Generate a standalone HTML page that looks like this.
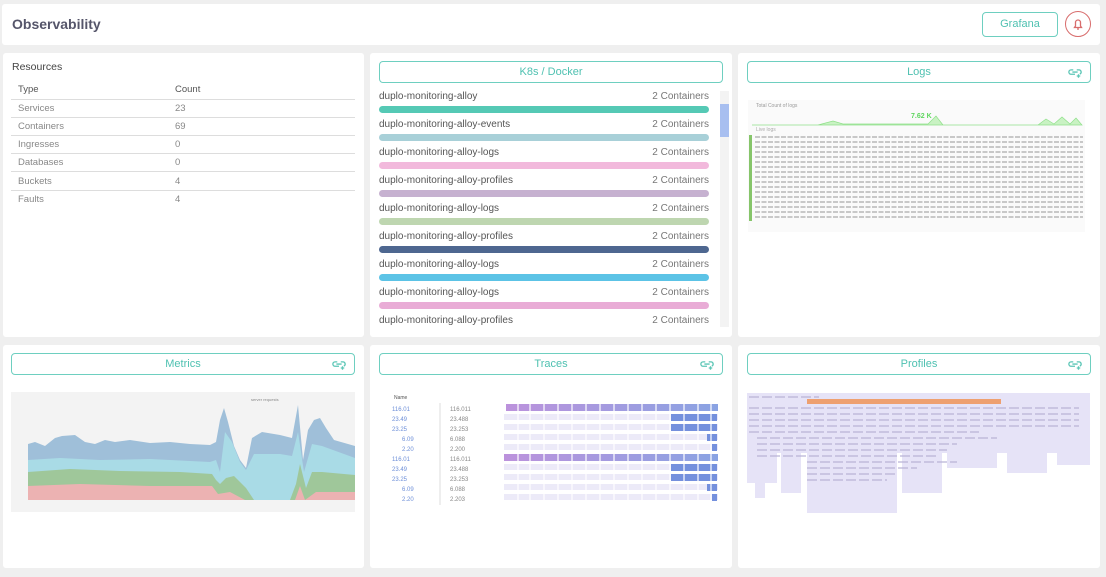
<!DOCTYPE html>
<html><head><meta charset="utf-8"><style>
*{margin:0;padding:0;box-sizing:border-box}
body{width:1106px;height:577px;background:#efefef;font-family:"Liberation Sans",sans-serif;position:relative;overflow:hidden;color:#555}
.card{position:absolute;background:#fff;border-radius:3px}
.btn{position:absolute;border:1.5px solid #6ecfc0;border-radius:4px;color:#4fc1b1;font-size:11px;text-align:center;line-height:21px;height:22px}
.lk{position:absolute;right:8px;top:5px}
.row{position:absolute;left:379px;width:330px;font-size:10px;color:#555}
.row span{float:right;color:#777}
.bar{position:absolute;left:379px;width:330px;height:7px;border-radius:4px}
table{border-collapse:collapse;position:absolute;left:11px;top:81px;width:344px;font-size:9.5px}
td,th{text-align:left;height:18.2px;padding-left:7px;border-bottom:1px solid #ddd;font-weight:normal;color:#888}
th{color:#555}
</style></head><body>
<div class="card" style="left:2px;top:4px;width:1098px;height:41px"></div>
<div style="position:absolute;left:12px;top:16px;font-size:14px;font-weight:bold;color:#55556a">Observability</div>
<div class="btn" style="left:982px;top:12px;width:76px;height:25px;line-height:23px">Grafana</div>
<div style="position:absolute;left:1065px;top:11px;width:26px;height:26px;border:1.3px solid #d86c6c;border-radius:50%"><svg width="24" height="24" viewBox="0 0 24 24"><path d="M8.5 15.5h7l-1-1.5v-3.5a2.5 2.5 0 0 0-5 0V14z" fill="none" stroke="#d86c6c" stroke-width="1.3"/><path d="M11 17h2" stroke="#d86c6c" stroke-width="1.3"/></svg></div>

<div class="card" style="left:3px;top:53px;width:361px;height:284px"></div>
<div class="card" style="left:370px;top:53px;width:362px;height:284px"></div>
<div class="card" style="left:738px;top:53px;width:362px;height:284px"></div>
<div class="card" style="left:3px;top:345px;width:361px;height:223px"></div>
<div class="card" style="left:370px;top:345px;width:362px;height:223px"></div>
<div class="card" style="left:738px;top:345px;width:362px;height:223px"></div>

<div style="position:absolute;left:12px;top:61px;font-size:10.5px;color:#444">Resources</div>
<table><tr><th>Type</th><th style="padding-left:0">Count</th></tr>
<tr><td style="width:164px">Services</td><td style="padding-left:0">23</td></tr>
<tr><td>Containers</td><td style="padding-left:0">69</td></tr>
<tr><td>Ingresses</td><td style="padding-left:0">0</td></tr>
<tr><td>Databases</td><td style="padding-left:0">0</td></tr>
<tr><td>Buckets</td><td style="padding-left:0">4</td></tr>
<tr><td style="border:none">Faults</td><td style="padding-left:0;border:none">4</td></tr></table>

<div class="btn" style="left:379px;top:61px;width:344px">K8s / Docker</div>
<div class="row" style="top:91px">duplo-monitoring-alloy<span>2 Containers</span></div>
<div class="bar" style="top:106px;background:#55c9b5"></div>
<div class="row" style="top:119px">duplo-monitoring-alloy-events<span>2 Containers</span></div>
<div class="bar" style="top:134px;background:#a8d0d8"></div>
<div class="row" style="top:147px">duplo-monitoring-alloy-logs<span>2 Containers</span></div>
<div class="bar" style="top:162px;background:#f2b9dc"></div>
<div class="row" style="top:175px">duplo-monitoring-alloy-profiles<span>2 Containers</span></div>
<div class="bar" style="top:190px;background:#c6b1d0"></div>
<div class="row" style="top:203px">duplo-monitoring-alloy-logs<span>2 Containers</span></div>
<div class="bar" style="top:218px;background:#bed6b0"></div>
<div class="row" style="top:231px">duplo-monitoring-alloy-profiles<span>2 Containers</span></div>
<div class="bar" style="top:246px;background:#4e6790"></div>
<div class="row" style="top:259px">duplo-monitoring-alloy-logs<span>2 Containers</span></div>
<div class="bar" style="top:274px;background:#5cc3e6"></div>
<div class="row" style="top:287px">duplo-monitoring-alloy-logs<span>2 Containers</span></div>
<div class="bar" style="top:302px;background:#e9acd6"></div>
<div class="row" style="top:315px">duplo-monitoring-alloy-profiles<span>2 Containers</span></div>
<div style="position:absolute;left:720px;top:91px;width:9px;height:236px;background:#f3f3f3"></div>
<div style="position:absolute;left:720px;top:104px;width:9px;height:33px;background:#a8bff0"></div>

<svg width="0" height="0" style="position:absolute"><defs><symbol id="lnk" viewBox="0 0 16 12"><path d="M6 3H3.5a2.5 2.5 0 0 0 0 5H8M10 3h2.5a2.5 2.5 0 0 1 1 4.8M5 5.5h6M12 8v4M10 10h4" fill="none" stroke="#5cc6b6" stroke-width="1.5"/></symbol></defs></svg>

<div class="btn" style="left:747px;top:61px;width:344px">Logs<svg class="lk" width="14" height="11"><use href="#lnk"/></svg></div>
<svg style="position:absolute;left:748px;top:100px" width="337" height="132">
<rect width="337" height="132" fill="#fafafa"/>
<text x="8" y="7" font-size="5" fill="#999">Total Count of logs</text>
<text x="163" y="18" font-size="7" fill="#5fd65f" font-weight="bold">7.62 K</text>
<path d="M4 25 L70 25 L85 21 L95 24 L180 24 L188 16 L195 25 L290 25 L298 19 L306 24 L314 17 L322 24 L328 18 L334 25 Z" fill="#c9f2c3" stroke="#8fe08a" stroke-width="0.7"/>
<text x="8" y="31" font-size="5" fill="#aaa">Live logs</text>
<rect x="1" y="35" width="3" height="86" fill="#86c56a"/>
<g stroke="#b8b8b8" stroke-width="1.5" stroke-dasharray="5 1.5">
<path d="M7 37h328M7 42h328M7 47h328M7 52h328M7 57h328M7 62h328M7 67h328M7 72h328M7 77h328M7 82h328M7 87h328M7 92h328M7 97h328M7 102h328M7 107h328M7 112h328M7 117h328"/>
</g></svg>

<div class="btn" style="left:11px;top:353px;width:344px">Metrics<svg class="lk" width="14" height="11"><use href="#lnk"/></svg></div>
<svg style="position:absolute;left:11px;top:392px" width="344" height="120">
<rect width="344" height="120" fill="#f3f3f3"/>
<g transform="translate(-11,-12)">
<path d="M28 64 L35 62 L45 66 L55 58 L62 56 L75 55 L85 62 L95 64 L105 60 L115 62 L130 60 L150 63 L170 62 L190 64 L210 65 L216 62 L220 40 L224 28 L228 42 L234 66 L240 80 L246 88 L252 58 L262 52 L280 55 L292 58 L298 25 L303 80 L308 50 L314 40 L320 38 L326 48 L334 60 L355 66 L355 120 L28 120Z" fill="#9fbfd9"/>
<path d="M28 80 L60 78 L100 80 L150 79 L210 82 L216 80 L220 92 L225 52 L232 62 L240 82 L246 90 L254 74 L280 74 L292 76 L298 52 L304 92 L312 64 L322 66 L355 78 L355 120 L28 120Z" fill="#a9dbe6"/>
<path d="M28 92 L70 89 L120 91 L180 92 L212 94 L216 100 L220 104 L226 98 L234 96 L246 108 L254 120 L290 120 L296 104 L300 84 L306 108 L312 92 L322 92 L355 95 L355 120 L28 120Z" fill="#9fc79a"/>
<path d="M28 106 L80 104 L150 106 L212 106 L218 114 L230 112 L245 120 L295 120 L300 106 L305 120 L316 112 L355 112 L355 120 L28 120Z" fill="#ecb2b2"/>
</g>
<rect x="0" y="108" width="344" height="12" fill="#f3f3f3"/>
<text x="240" y="9" font-size="4" fill="#888">server requests</text>
</svg>

<div class="btn" style="left:379px;top:353px;width:344px">Traces<svg class="lk" width="14" height="11"><use href="#lnk"/></svg></div>
<svg style="position:absolute;left:378px;top:393px" width="345" height="115">
<text x="16" y="6" font-size="5" fill="#555">Name</text>
<g font-size="6" fill="#6d8fd8">
<text x="14" y="18">116.01</text><text x="14" y="28">23.49</text><text x="14" y="38">23.25</text><text x="24" y="48">6.09</text><text x="24" y="58">2.20</text><text x="14" y="68">116.01</text><text x="14" y="78">23.49</text><text x="14" y="88">23.25</text><text x="24" y="98">6.09</text><text x="24" y="108">2.20</text></g>
<g font-size="6" fill="#888">
<text x="72" y="18">116.011</text><text x="72" y="28">23.488</text><text x="72" y="38">23.253</text><text x="72" y="48">6.088</text><text x="72" y="58">2.200</text><text x="72" y="68">116.011</text><text x="72" y="78">23.488</text><text x="72" y="88">23.253</text><text x="72" y="98">6.088</text><text x="72" y="108">2.203</text></g>
<line x1="62" y1="10" x2="62" y2="112" stroke="#ddd"/>
<g fill="#eceaf8">
<rect x="126" y="21" width="214" height="6"/><rect x="126" y="31" width="214" height="6"/><rect x="126" y="41" width="214" height="6"/><rect x="126" y="51" width="214" height="6"/>
<rect x="126" y="71" width="214" height="6"/><rect x="126" y="81" width="214" height="6"/><rect x="126" y="91" width="214" height="6"/><rect x="126" y="101" width="214" height="6"/></g>
<defs><linearGradient id="g" x1="0" x2="1"><stop offset="0" stop-color="#b07fd6"/><stop offset="1" stop-color="#7593de"/></linearGradient></defs>
<rect x="128" y="11" width="212" height="7" fill="url(#g)" opacity=".85"/>
<rect x="126" y="61" width="214" height="7" fill="url(#g)" opacity=".85"/>
<g fill="#7490dd"><rect x="293" y="21" width="46" height="7"/><rect x="293" y="31" width="46" height="7"/><rect x="293" y="81" width="46" height="7"/><rect x="293" y="71" width="46" height="7"/>
<rect x="329" y="41" width="10" height="7"/><rect x="334" y="51" width="5" height="7"/><rect x="329" y="91" width="10" height="7"/><rect x="334" y="101" width="5" height="7"/></g>
<g stroke="#fff" stroke-width="1.2"><path d="M140 8v100M152 8v100M166 8v100M180 8v100M194 8v100M208 8v100M222 8v100M236 8v100M250 8v100M264 8v100M278 8v100M292 8v100M306 8v100M320 8v100M333 8v100"/></g>
</svg>

<div class="btn" style="left:747px;top:353px;width:344px">Profiles<svg class="lk" width="14" height="11"><use href="#lnk"/></svg></div>
<svg style="position:absolute;left:747px;top:393px" width="344" height="120">
<g fill="#e6e3f7">
<rect x="0" y="0" width="343" height="60"/>
<rect x="0" y="60" width="30" height="30"/><rect x="34" y="60" width="20" height="40"/><rect x="60" y="60" width="90" height="60"/><rect x="155" y="60" width="40" height="40"/><rect x="200" y="60" width="50" height="15"/><rect x="260" y="60" width="40" height="20"/><rect x="310" y="60" width="33" height="12"/><rect x="8" y="90" width="10" height="15"/><rect x="70" y="100" width="30" height="15"/>
</g>
<rect x="60" y="6" width="194" height="5" fill="#eea070"/>
<g stroke="#b9b3d6" stroke-width="1.2" stroke-dasharray="10 3">
<path d="M2 4h70M2 15h330M2 21h330M2 27h330M2 33h330M2 39h230M10 45h240M10 51h200M10 57h190M10 63h180M60 69h150M60 75h110M60 81h90M60 87h80"/></g>
</svg>
</body></html>
